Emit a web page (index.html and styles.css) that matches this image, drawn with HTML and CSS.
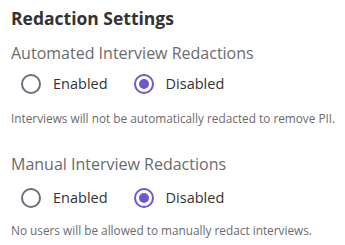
FILE: index.html
```html
<!DOCTYPE html>
<html>
<head>
<meta charset="utf-8">
<link rel="stylesheet" href="styles.css">
</head>
<body>
<div class="page">
  <h1 class="title">Redaction Settings</h1>
  <section class="group">
    <h2 class="subtitle">Automated Interview Redactions</h2>
    <div class="options">
      <label class="option"><span class="radio"></span><span class="label">Enabled</span></label>
      <label class="option"><span class="radio checked"></span><span class="label">Disabled</span></label>
    </div>
    <p class="help">Interviews will not be automatically redacted to remove PII.</p>
  </section>
  <section class="group second">
    <h2 class="subtitle">Manual Interview Redactions</h2>
    <div class="options">
      <label class="option"><span class="radio"></span><span class="label">Enabled</span></label>
      <label class="option"><span class="radio checked"></span><span class="label">Disabled</span></label>
    </div>
    <p class="help">No users will be allowed to manually redact interviews.</p>
  </section>
</div>
</body>
</html>
```
FILE: styles.css
```css
html, body { margin: 0; padding: 0; background: #fff; }
body { font-family: "Open Sans", "Liberation Sans", sans-serif; }
.page { padding: 6px 0 0 11px; }
.title { margin: 0; font-size: 17.5px; font-weight: 700; color: #333; line-height: 24px; }
.subtitle { margin: 0; font-size: 16px; font-weight: 400; color: #6b6b6b; line-height: 22px; }
.group { margin-top: 12px; }
.group.second { margin-top: 27px; }
.options { display: flex; gap: 26px; padding-left: 10px; margin-top: 10px; }
.second .options { margin-top: 13px; }
.option { display: flex; align-items: center; gap: 12px; }
.radio { width: 16px; height: 16px; border: 2px solid #6e6e7a; border-radius: 50%; box-sizing: content-box; display: flex; align-items: center; justify-content: center; }
.radio.checked { border-color: #6a5acd; }
.radio.checked::after { content: ""; width: 10px; height: 10px; border-radius: 50%; background: #6a5acd; }
.label { font-size: 14.5px; color: #333; line-height: 20px; }
.help { margin: 16px 0 0; font-size: 11.8px; color: #6b6b6b; line-height: 16px; }
.second .help { margin-top: 14px; }
```
